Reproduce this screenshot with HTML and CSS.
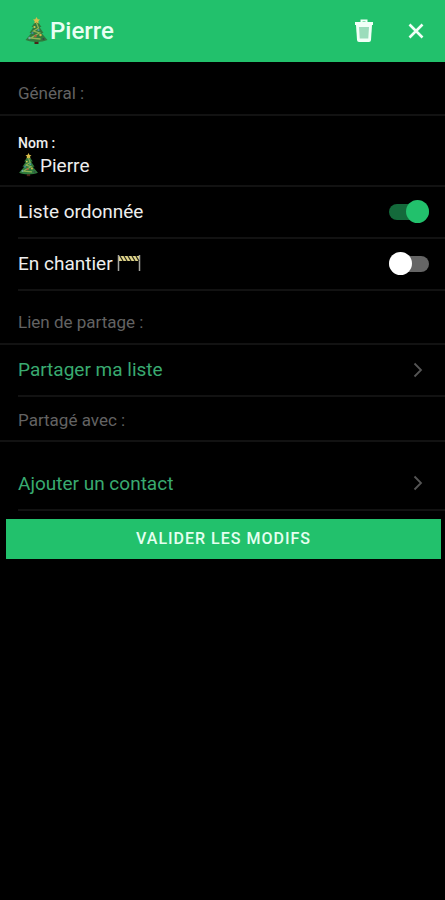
FILE: index.html
```html
<!DOCTYPE html>
<html lang="fr">
<head>
<meta charset="utf-8">
<meta name="viewport" content="width=device-width, initial-scale=1">
<title>Pierre</title>
<link rel="stylesheet" href="styles.css">
</head>
<body>
<svg class="defs" aria-hidden="true">
  <symbol id="tree" viewBox="0 0 24 28">
    <path d="M10 22h4v5h-4z" fill="#4a2318"/>
    <path d="M12 3l5 7-2 0 4 6-2 0 6 7c-6 2.500-16 2.500-22 0l6-7-2 0 4-6-2 0z" fill="#2f7a3c"/>
    <path d="M12 6l2 5-5 3 6 2-9 5 10 1" fill="none" stroke="#8fb355" stroke-width="1.300"/>
    <path d="M12 0l1.200 2.200 2.300.3-1.700 1.700.4 2.300-2.200-1.100-2.200 1.100.4-2.300-1.700-1.700 2.300-.3z" fill="#d9bd4a"/>
    <circle cx="10" cy="10" r="1.100" fill="#d6c75a"/>
    <circle cx="14" cy="13" r="1.100" fill="#4d9ba6"/>
    <circle cx="8" cy="16" r="1.100" fill="#4a86a0"/>
    <circle cx="16" cy="18" r="1.200" fill="#d3b94b"/>
    <circle cx="11" cy="19" r="1.200" fill="#b7583c"/>
    <circle cx="5" cy="21" r="1.200" fill="#74a9a4"/>
    <circle cx="19" cy="22" r="1.100" fill="#35484a"/>
  </symbol>
  <symbol id="chevron" viewBox="0 0 10 16">
    <path d="M1.500 1.500L8 8l-6.500 6.500" fill="none" stroke="currentColor" stroke-width="1.800"/>
  </symbol>
</svg>
<header class="bar">
  <svg class="bar-tree" aria-hidden="true"><use href="#tree"/></svg>
  <h1 class="bar-title">Pierre</h1>
  <button class="icon-button" type="button" aria-label="Supprimer">
    <svg class="trash" viewBox="0 0 20 24" aria-hidden="true">
      <path d="M7.500 3V1.500h5V3" fill="none" stroke="#f1fff7" stroke-width="2"/>
      <path d="M1 3h18v3H1z" fill="#f1fff7"/>
      <path d="M2 6h16l-1 15q-.2 2-2 2H5q-1.800 0-2-2z" fill="#f1fff7"/>
      <path d="M5 8h10l-.7 11.500H5.700z" fill="#9bdcbb"/>
    </svg>
  </button>
  <button class="icon-button" type="button" aria-label="Fermer">
    <svg class="close" viewBox="0 0 16 16" aria-hidden="true">
      <path d="M1.500 1.500l13 13M14.500 1.500l-13 13" stroke="#f1fff7" stroke-width="2.600"/>
    </svg>
  </button>
</header>
<main>
  <form class="settings">
    <h2 class="section section-tall">Général :</h2>
    <div class="field">
      <label class="field-label" for="name">Nom :</label>
      <div class="field-value">
        <svg class="field-tree" aria-hidden="true"><use href="#tree"/></svg>
        <input class="field-input" id="name" type="text" value="Pierre">
      </div>
    </div>
    <div class="row">
      <label class="row-label" for="ordered">Liste ordonnée</label>
      <input class="switch" id="ordered" type="checkbox" checked>
    </div>
    <div class="row">
      <label class="row-label" for="wip">En chantier
        <svg class="barrier" viewBox="0 0 24 18" aria-hidden="true">
          <path d="M1.500 1v16M22.500 1v16" stroke="#a5a5a0" stroke-width="1.500"/>
          <path d="M2 2h20v5H2z" fill="#e0d58a"/>
          <path d="M3 2l3 5M7 2l3 5M11 2l3 5M15 2l3 5M19 2l3 5" stroke="#29281d" stroke-width="1.300"/>
        </svg>
      </label>
      <input class="switch" id="wip" type="checkbox">
    </div>
    <h2 class="section section-tall">Lien de partage :</h2>
    <a class="row row-link" href="#partager">Partager ma liste
      <svg class="chevron" aria-hidden="true"><use href="#chevron"/></svg>
    </a>
    <h2 class="section">Partagé avec :</h2>
    <a class="row row-link row-spaced" href="#contact">Ajouter un contact
      <svg class="chevron" aria-hidden="true"><use href="#chevron"/></svg>
    </a>
    <button class="submit" type="submit">VALIDER LES MODIFS</button>
  </form>
</main>
</body>
</html>
```
FILE: styles.css
```css
* {
  box-sizing: border-box;
}

body {
  margin: 0;
  background: #000;
  color: #eee;
  font-family: Roboto, "Liberation Sans", sans-serif;
  font-size: 19px;
}

button,
input {
  margin: 0;
  padding: 0;
  border: 0;
  background: none;
  color: inherit;
  font: inherit;
}

.defs {
  display: block;
  width: 0;
  height: 0;
}

.bar {
  display: flex;
  align-items: center;
  height: 62px;
  padding: 0 17px 0 24px;
  background: #22c16c;
}

.bar-tree {
  width: 25px;
  height: 28px;
}

.bar-title {
  flex: 1;
  margin: 0 0 0 1px;
  color: #e9fff3;
  font-size: 24px;
  font-weight: 500;
}

.icon-button {
  display: flex;
  align-items: center;
  justify-content: center;
  height: 48px;
  margin-left: 30px;
}

.trash {
  width: 20px;
  height: 24px;
}

.close {
  width: 24px;
  height: 16px;
}

.section {
  display: flex;
  align-items: center;
  height: 45px;
  margin: 0;
  padding: 2px 18px 0;
  border-bottom: 2px solid #121212;
  color: #636363;
  font-size: 17px;
  font-weight: 400;
}

.section-tall {
  height: 54px;
  padding-top: 10px;
}

.field {
  height: 71px;
  padding: 17px 18px 0;
  border-bottom: 2px solid #121212;
}

.field-label {
  display: block;
  font-size: 14px;
  font-weight: 500;
  line-height: 20px;
}

.field-value {
  display: flex;
  align-items: center;
  height: 24px;
}

.field-tree {
  width: 21px;
  height: 24px;
}

.field-input {
  flex: 1;
  min-width: 0;
  height: 24px;
  margin-left: 1px;
}

.row {
  display: flex;
  align-items: center;
  justify-content: space-between;
  height: 52px;
  margin-left: 18px;
  padding-right: 16px;
  border-bottom: 2px solid #121212;
}

.row-label {
  display: flex;
  flex: 1;
  align-items: center;
  gap: 4px;
  padding-bottom: 2px;
}

.barrier {
  width: 24px;
  height: 18px;
}

.row-link {
  padding-right: 22px;
  padding-bottom: 1px;
  color: #39aa70;
  text-decoration: none;
}

.row-spaced {
  height: 69px;
  padding-top: 16px;
}

.chevron {
  width: 10px;
  height: 16px;
  color: #555;
}

.switch {
  position: relative;
  width: 40px;
  height: 24px;
  appearance: none;
}

.switch::before {
  content: "";
  position: absolute;
  inset: 4px 0;
  border-radius: 8px;
  background: #656565;
}

.switch::after {
  content: "";
  position: absolute;
  top: 0;
  left: 0;
  width: 23px;
  height: 23px;
  border-radius: 50%;
  background: #fff;
}

.switch:checked::before {
  background: #146a3b;
}

.switch:checked::after {
  right: 0;
  left: auto;
  background: #22c16c;
}

.submit {
  display: block;
  width: calc(100% - 10px);
  height: 40px;
  margin: 8px 4px 0 6px;
  padding-bottom: 2px;
  background: #22c16c;
  color: #e4fff0;
  font-size: 16px;
  font-weight: 500;
  letter-spacing: 1px;
}
```
